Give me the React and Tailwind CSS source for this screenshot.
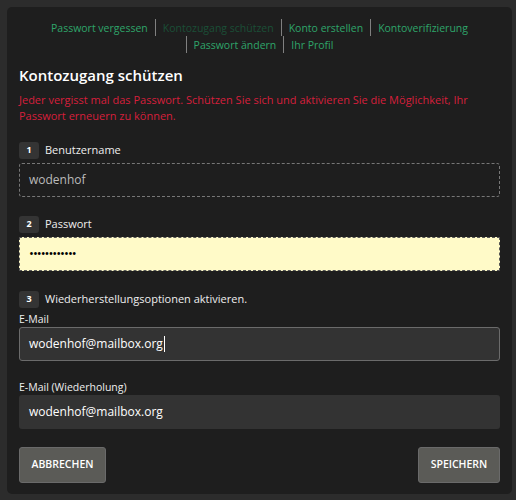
import React from "react";

function Sep({ className = "mx-[7px]" }) {
  return <span className={`${className} h-[17px] w-px bg-[#808080]`} />;
}

function Badge({ n }) {
  return (
    <span className="inline-flex h-[17px] w-[20px] items-center justify-center rounded-[3px] bg-[#343434] text-[9px] font-bold text-white">
      {n}
    </span>
  );
}

function Step({ n, label }) {
  return (
    <div className="flex items-center gap-[6px] text-[11px] leading-[20px] text-[#eeeeee]">
      <Badge n={n} />
      <span>{label}</span>
    </div>
  );
}

export default function App() {
  return (
    <div
      className="min-h-[500px] w-[516px] bg-[#2c2c2c] p-[7px]"
      style={{ fontFamily: '"Open Sans", "Noto Sans", sans-serif' }}
    >
      <div className="h-[487px] w-[505px] rounded-[5px] bg-[#1e1e1e] px-[12px] pt-[12px]">
        {/* Navigation */}
        <div className="flex flex-col items-center whitespace-nowrap text-[10.5px] leading-[16px] text-[#2ea56a]">
          <div className="flex items-center">
            <span>Passwort vergessen</span>
            <Sep />
            <span className="text-[#1b4f37]">Kontozugang schützen</span>
            <Sep />
            <span>Konto erstellen</span>
            <Sep />
            <span>Kontoverifizierung</span>
          </div>
          <div className="flex items-center">
            <Sep className="mr-[7px]" />
            <span>Passwort ändern</span>
            <Sep />
            <span>Ihr Profil</span>
          </div>
        </div>

        <h1 className="mt-[10px] text-[15px] font-semibold leading-[24px] text-white">
          Kontozugang schützen
        </h1>
        <p className="mt-[5px] text-[11px] font-medium leading-[16px] text-[#d61f3c]">
          Jeder vergisst mal das Passwort. Schützen Sie sich und aktivieren Sie die Möglichkeit, Ihr
          Passwort erneuern zu können.
        </p>

        <div className="mt-[16px]">
          <Step n="1" label="Benutzername" />
          <div className="mt-[3px] flex h-[34px] items-center rounded-[3px] border border-dashed border-[#777] px-[9px] text-[12px] text-[#bbbbbb]">
            wodenhof
          </div>
        </div>

        <div className="mt-[17px]">
          <Step n="2" label="Passwort" />
          <div className="mt-[3px] flex h-[34px] items-center border border-dashed border-[#555] bg-[#fffac8] px-[9px] text-[13px] tracking-[-1px] text-black">
            ••••••••••••
          </div>
        </div>

        <div className="mt-[18px]">
          <Step n="3" label="Wiederherstellungsoptionen aktivieren." />
          <div className="mt-[3px] text-[10.5px] leading-[14px] text-[#eeeeee]">E-Mail</div>
          <div className="mt-[1px] flex h-[34px] items-center rounded-[3px] border border-[#6b6b6b] bg-[#333333] px-[9px] text-[12px] text-white">
            wodenhof@mailbox.org
            <span className="ml-[1px] h-[16px] w-px bg-white" />
          </div>
          <div className="mt-[19px] text-[10.5px] leading-[14px] text-[#eeeeee]">
            E-Mail (Wiederholung)
          </div>
          <div className="mt-[1px] flex h-[34px] items-center rounded-[3px] bg-[#333333] px-[10px] text-[12px] text-white">
            wodenhof@mailbox.org
          </div>
        </div>

        <div className="mt-[18px] flex justify-between">
          <button className="h-[36px] w-[87px] rounded-[3px] border border-[#6a6a6a] bg-[#5b5b57] text-[10.5px] font-semibold text-white">
            ABBRECHEN
          </button>
          <button className="h-[36px] w-[82px] rounded-[3px] border border-[#6a6a6a] bg-[#5b5b57] text-[10.5px] font-semibold text-white">
            SPEICHERN
          </button>
        </div>
      </div>
    </div>
  );
}
